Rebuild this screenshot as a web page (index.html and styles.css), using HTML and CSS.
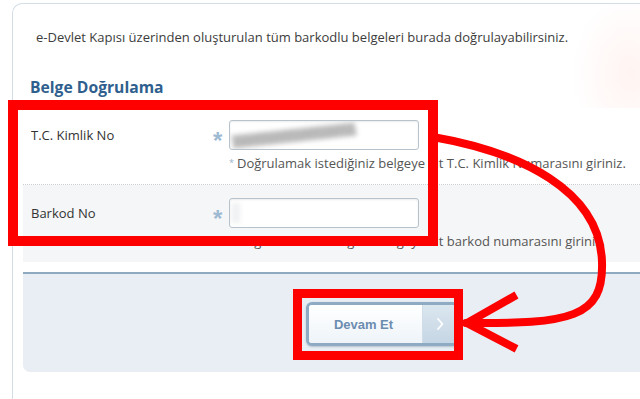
FILE: index.html
```html
<!DOCTYPE html>
<html lang="tr">
<head>
<meta charset="utf-8">
<title>Belge Doğrulama</title>
<link rel="stylesheet" href="styles.css">
</head>
<body>
<div class="panel">
  <p class="intro">e-Devlet Kapısı üzerinden oluşturulan tüm barkodlu belgeleri burada doğrulayabilirsiniz.</p>
  <h2 class="title">Belge Doğrulama</h2>
  <div class="form">
    <div class="row">
      <label class="label">T.C. Kimlik No</label>
      <span class="req">*</span>
      <div class="field">
        <div class="input"><span class="blur"></span></div>
        <div class="hint"><span class="hint-mark">*</span>Doğrulamak istediğiniz belgeye ait T.C. Kimlik Numarasını giriniz.</div>
      </div>
    </div>
    <div class="row row-alt">
      <label class="label">Barkod No</label>
      <span class="req">*</span>
      <div class="field">
        <div class="input"><span class="blur blur-light"></span></div>
        <div class="hint"><span class="hint-mark">*</span>Doğrulamak istediğiniz belgeye ait barkod numarasını giriniz.</div>
      </div>
    </div>
  </div>
  <div class="actions">
    <button class="btn" type="button">
      <span class="btn-text">Devam Et</span>
      <span class="btn-arrow">
        <svg width="10" height="14" viewBox="0 0 10 14"><path d="M3 2 L7.5 7 L3 12" fill="none" stroke="#ffffff" stroke-width="1.8" stroke-linecap="round" stroke-linejoin="round"/></svg>
      </span>
    </button>
  </div>
</div>
<svg class="annot" width="640" height="399" viewBox="0 0 640 399">
  <rect x="13" y="105" width="420" height="136" fill="none" stroke="#ff0000" stroke-width="10"/>
  <rect x="297.5" y="293.5" width="161" height="62" fill="none" stroke="#ff0000" stroke-width="9"/>
  <path d="M433 137 C 520 152 600 190 602 262 C 604 318 570 324 466 323" fill="none" stroke="#ff0000" stroke-width="8" stroke-linecap="round"/>
  <path d="M513 297 L467 323 L513 347" fill="none" stroke="#ff0000" stroke-width="8" stroke-linecap="square" stroke-linejoin="miter"/>
</svg>
</body>
</html>
```

FILE: styles.css
```css
html, body {
  margin: 0;
  padding: 0;
  background: #ffffff;
  width: 640px;
  height: 399px;
  overflow: hidden;
}

body {
  font-family: "Open Sans", "DejaVu Sans", sans-serif;
  font-size: 13px;
  color: #444444;
  position: relative;
}

.panel {
  margin: 3px 0 0 12px;
  width: 628px;
  height: 396px;
  border-left: 1px solid #d3dde6;
  border-top: 1px solid #d3dde6;
  border-top-left-radius: 10px;
  padding-left: 10px;
  box-sizing: border-box;
  background:
    radial-gradient(ellipse 60px 80px at 618px 70px, rgba(255, 230, 225, 0.45), rgba(255, 255, 255, 0) 100%),
    #ffffff;
}

.intro {
  margin: 0;
  padding: 25px 0 0 13px;
  line-height: 16px;
  font-size: 13px;
  color: #3c3c3c;
  white-space: nowrap;
}

.title {
  margin: 32px 0 0 7px;
  font-size: 15.7px;
  line-height: 20px;
  font-weight: 700;
  color: #2f5f8e;
}

.form {
  margin-top: 11px;
}

.row {
  display: grid;
  grid-template-columns: 182px 16px 1fr;
  padding: 12px 0 13px 8px;
  border-bottom: 1px dotted #c8cdd2;
  background: #ffffff;
}

.row-alt {
  background: #f5f6f7;
  border-bottom: none;
  padding-top: 13px;
}

.label {
  line-height: 30px;
  color: #333333;
  font-size: 13px;
}

.req {
  line-height: 30px;
  font-size: 24px;
  font-weight: 700;
  color: #9dbad2;
  font-family: "Liberation Sans", sans-serif;
  padding-top: 6px;
}

.input {
  width: 190px;
  height: 30px;
  box-sizing: border-box;
  border: 1px solid #b7c3cc;
  border-radius: 3px;
  background: #ffffff;
  box-shadow: inset 0 1px 2px rgba(0, 0, 0, 0.08);
  display: flex;
  align-items: center;
  padding-left: 2px;
  overflow: hidden;
}

.blur {
  display: block;
  width: 124px;
  height: 13px;
  background: repeating-linear-gradient(115deg, #a9a9a9 0 3px, #cacaca 3px 6px);
  filter: blur(2.5px);
  transform: rotate(-6deg);
}

.blur-light {
  width: 8px;
  height: 20px;
  background: #eef0f2;
  transform: none;
}

.hint {
  margin-top: 5px;
  line-height: 16px;
  color: #555555;
  font-size: 13px;
  white-space: nowrap;
}

.hint-mark {
  font-size: 9px;
  color: #9bb6cc;
  vertical-align: top;
  margin-right: 3px;
}

.actions {
  margin-top: 10px;
  border-top: 2px solid #8eaac1;
  background: #e8eef3;
  border-bottom-left-radius: 7px;
  padding: 28px 0 26px 283px;
}

.btn {
  display: flex;
  width: 153px;
  height: 44px;
  padding: 0;
  border: 3px solid #8eabc3;
  border-radius: 6px;
  overflow: hidden;
  background: #ffffff;
  box-shadow: 0 1px 2px rgba(60, 90, 120, 0.3);
  cursor: pointer;
}

.btn-text {
  flex: 1;
  display: flex;
  align-items: center;
  justify-content: center;
  font-family: "Liberation Sans", Arial, sans-serif;
  font-weight: 700;
  font-size: 13px;
  color: #6b8db0;
  background: linear-gradient(#ffffff, #eef4f9);
  padding-right: 4px;
}

.btn-arrow {
  width: 33px;
  display: flex;
  align-items: center;
  justify-content: center;
  background: linear-gradient(#dbe6ef, #c5d6e4);
  border-left: 1px solid #d0dde8;
}

.annot {
  position: absolute;
  left: 0;
  top: 0;
  pointer-events: none;
}
```
